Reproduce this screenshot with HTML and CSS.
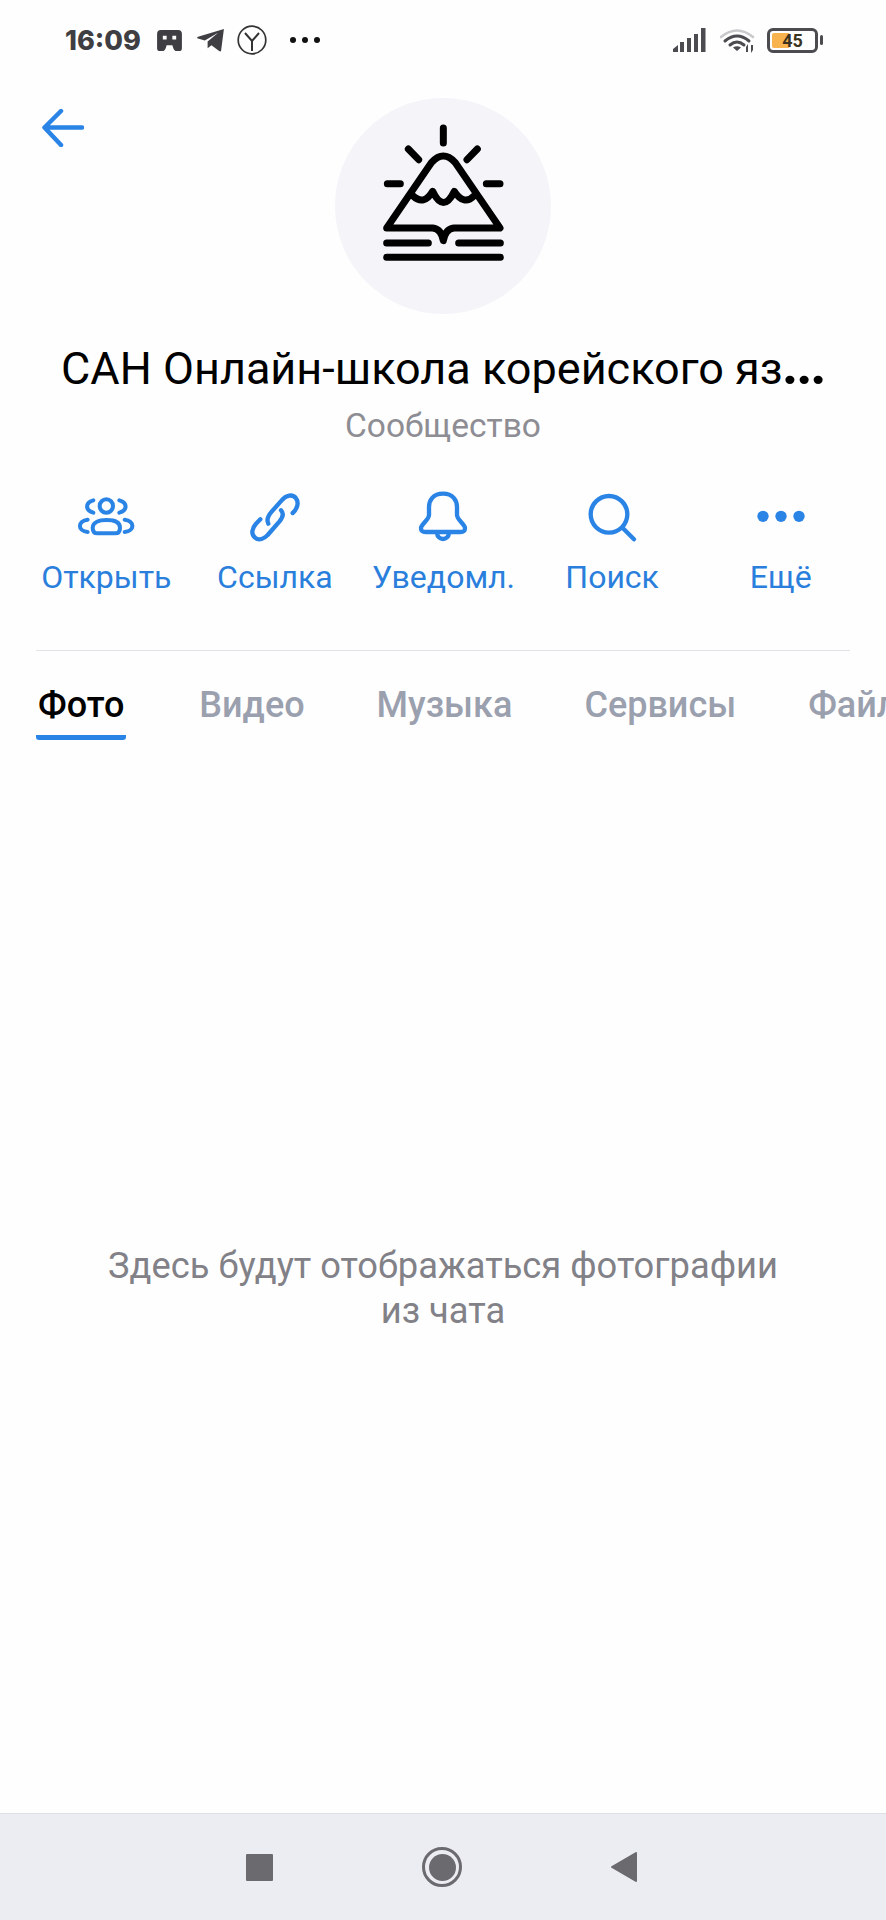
FILE: index.html
```html
<!DOCTYPE html>
<html lang="ru">
<head>
    <meta charset="UTF-8">
    <meta name="viewport" content="width=device-width, initial-scale=1.0">
    <title>Фото</title>
    <link rel="stylesheet" href="styles.css">
</head>
<body>
    <div class="screen">
        <div class="status-bar">
            <div class="status-left">
                <span class="clock">16:09</span>
                <svg class="st-game" viewBox="0 0 26 22"><path fill="#3f3e43" fill-rule="evenodd" d="M4 0H22Q26 0 26 4V19Q26 22 23 22H21Q18 22 17 19L16 16H10L9 19Q8 22 5 22H3Q0 22 0 19V4Q0 0 4 0ZM6 6V10H10V6ZM16 6V10H20V6Z"/></svg>
                <svg class="st-tg" viewBox="0 0 28 24"><path fill="#3f3e43" d="M28 0L25 23Q24.500 24 23 23L15 17L11 20L11 13L22 4L8 12L1 10Q-1 9 1 8Z"/></svg>
                <svg class="st-ya" viewBox="0 0 30 30"><circle cx="15" cy="15" r="13.800" fill="none" stroke="#333" stroke-width="1.700"/><path fill="none" stroke="#333" stroke-width="2" d="M8 8L15 16L22 8M15 16V26"/></svg>
                <div class="st-dots"><i></i><i></i><i></i></div>
            </div>
            <div class="status-right">
                <svg class="st-signal" viewBox="0 0 33 24"><path fill="#4b4b50" d="M0 24V21L5 17V24ZM7 24V14H11V24ZM14 24V10H18V24ZM21 24V6H25V24ZM28 24V0H32.500V24Z"/></svg>
                <svg class="st-wifi" viewBox="0 0 36 26"><g fill="none" stroke-linecap="round"><path stroke="#c9c9cb" stroke-width="2.500" d="M1 10Q17 -3 33 10"/><path stroke="#4b4b50" stroke-width="3" d="M5 14Q17 4 29 14"/><path stroke="#4b4b50" stroke-width="3" d="M10 18Q17 12 24 18"/></g><path fill="#4b4b50" d="M17 24L13 20.500Q17 18 21 20.500ZM28 17V25H26V20ZM31 26V18H33L33 23Z"/></svg>
                <div class="battery">
                    <div class="battery-body"><span class="battery-fill"></span><span class="battery-num">45</span></div>
                    <span class="battery-nub"></span>
                </div>
            </div>
        </div>

        <header class="profile-top">
            <a class="back" href="#">
                <svg viewBox="0 0 42 38"><path fill="none" stroke="#2a84e6" stroke-width="4.500" stroke-linecap="round" stroke-linejoin="round" d="M40 18.500H3M19 2L2.500 18.500L19 36"/></svg>
            </a>
            <div class="avatar">
                <svg viewBox="45 25 648 648">
                    <g fill="none" stroke="#000" stroke-width="21" stroke-linecap="round" stroke-linejoin="round">
                        <path d="M370 115V160M265 178L296 210M472 178L441 210M202 282H241M499 282H540"/>
                        <path d="M200 415L335 218Q370 180 405 218L540 415H402Q376 418 370 453Q364 418 338 415Z"/>
                        <path d="M278 318Q312 350 338 305Q370 372 403 305Q432 350 463 318"/>
                        <path d="M200 460H325M416 460H541M200 503H541"/>
                    </g>
                </svg>
            </div>
        </header>

        <h1 class="title">САН Онлайн-школа корейского яз<b>...</b></h1>
        <p class="subtitle">Сообщество</p>

        <nav class="actions">
            <a class="action" href="#">
                <svg viewBox="168 48 180 180"><g fill="none" stroke="#2a84e6" stroke-width="12" stroke-linecap="round" stroke-linejoin="round"><circle cx="259" cy="105" r="20"/><path d="M220 88C195 95 195 118 220 125M298 88C323 95 323 118 298 125"/><path d="M218 170C218 155 235 147 260 147C285 147 300 155 300 170C300 182 295 187 285 187H233C223 187 218 182 218 170Z"/><path d="M203 146C172 150 172 180 203 183M314 146C345 150 345 180 314 183"/></g></svg>
                <span>Открыть</span>
            </a>
            <a class="action" href="#">
                <svg viewBox="672 48 180 180"><g fill="none" stroke="#2a84e6" stroke-width="13" stroke-linecap="round" stroke-linejoin="round"><path d="M742 158C735 145 745 130 752 122L782 88C795 72 815 68 825 82C835 95 828 115 815 126"/><path d="M718 145L705 158C692 172 690 190 702 200C714 210 730 202 740 192L775 152C785 140 790 128 780 118"/></g></svg>
                <span>Ссылка</span>
            </a>
            <a class="action" href="#">
                <svg viewBox="0 0 180 180"><g fill="none" stroke="#2a84e6" stroke-width="13" stroke-linecap="round" stroke-linejoin="round"><path d="M90 20C60 20 48 40 48 60V84C48 98 24 113 24 123C24 133 28 135 38 135H142C152 135 156 133 156 123C156 113 132 98 132 84V60C132 40 120 20 90 20Z"/><path d="M72 138C74 162 106 162 108 138"/></g></svg>
                <span>Уведомл.</span>
            </a>
            <a class="action" href="#">
                <svg viewBox="399 48 180 180"><g fill="none" stroke="#2a84e6" stroke-width="13" stroke-linecap="round"><circle cx="480" cy="130" r="55"/><path d="M522 172L555 205"/></g></svg>
                <span>Поиск</span>
            </a>
            <a class="action" href="#">
                <svg viewBox="901 48 180 180"><g fill="#2a84e6"><circle cx="937" cy="136" r="17"/><circle cx="991" cy="136" r="17"/><circle cx="1045" cy="136" r="17"/></g></svg>
                <span>Ещё</span>
            </a>
        </nav>

        <div class="divider"></div>

        <div class="tabs">
            <a class="tab active" href="#">Фото</a>
            <a class="tab" href="#">Видео</a>
            <a class="tab" href="#">Музыка</a>
            <a class="tab" href="#">Сервисы</a>
            <a class="tab" href="#">Файлы</a>
        </div>

        <main class="empty">
            <p>Здесь будут отображаться фотографии<br>из чата</p>
        </main>

        <div class="nav-bar">
            <span class="nav-square"></span>
            <span class="nav-circle"><i></i></span>
            <svg class="nav-back" viewBox="0 0 26 30"><path fill="#6b6a6f" stroke="#6b6a6f" stroke-width="2" stroke-linejoin="round" d="M25 1V29L1 15Z"/></svg>
        </div>
    </div>
</body>
</html>
```

FILE: styles.css
```css
* {
    box-sizing: border-box;
}

body {
    margin: 0;
    background-color: #fefeff;
    font-family: Roboto, "Noto Sans", sans-serif;
}

a {
    text-decoration: none;
}

.screen {
    width: 886px;
    height: 1920px;
    display: flex;
    flex-direction: column;
    overflow: hidden;
}

/* status bar */
.status-bar {
    height: 80px;
    padding: 25px 63px 0 65px;
    display: flex;
    justify-content: space-between;
    align-items: flex-start;
}

.status-left,
.status-right {
    display: flex;
    align-items: center;
    height: 30px;
}

.clock {
    font-family: Inter, Roboto, sans-serif;
    font-size: 27px;
    font-weight: 800;
    color: #3f3e43;
    width: 92px;
}

.st-game { width: 25px; height: 21px; margin-right: 15px; }
.st-tg { width: 27px; height: 23px; margin-right: 13px; }
.st-ya { width: 30px; height: 30px; margin-right: 23px; }

.st-dots {
    display: flex;
    gap: 6px;
}

.st-dots i {
    width: 6px;
    height: 6px;
    border-radius: 50%;
    background-color: #111;
}

.st-signal { width: 33px; height: 24px; margin-right: 14px; }
.st-wifi { width: 36px; height: 26px; margin-right: 11px; }

.battery {
    display: flex;
    align-items: center;
    gap: 2px;
}

.battery-body {
    position: relative;
    width: 51px;
    height: 25px;
    border: 3px solid #4b4b50;
    border-radius: 6px;
    display: flex;
    align-items: center;
    justify-content: center;
}

.battery-fill {
    position: absolute;
    left: 2px;
    top: 2px;
    bottom: 2px;
    width: 18px;
    border-radius: 2px;
    background-color: #f8b24e;
}

.battery-num {
    position: relative;
    font-size: 18px;
    font-weight: 700;
    color: #3a3320;
}

.battery-nub {
    width: 3px;
    height: 10px;
    border-radius: 2px;
    background-color: #4b4b50;
}

/* header */
.profile-top {
    display: grid;
    grid-template-columns: 1fr 216px 1fr;
    padding-top: 18px;
}

.back {
    padding: 11px 0 0 42px;
}

.back svg {
    display: block;
    width: 42px;
    height: 38px;
}

.avatar {
    width: 216px;
    height: 216px;
    border-radius: 50%;
    background-color: #f4f4f9;
}

.avatar svg {
    display: block;
    width: 216px;
    height: 216px;
}

.title {
    margin: 30px 0 0;
    font-size: 45px;
    font-weight: 400;
    line-height: 50px;
    text-align: center;
    color: #000;
    white-space: nowrap;
}

.title b {
    font-size: 50px;
    font-weight: 900;
    line-height: 0;
    letter-spacing: -1px;
}

.subtitle {
    margin: 12px 0 0;
    font-size: 33.500px;
    line-height: 40px;
    text-align: center;
    color: #8d8d93;
}

/* action buttons */
.actions {
    margin-top: 41px;
    padding: 0 21px 0 22px;
    display: grid;
    grid-template-columns: repeat(5, 1fr);
}

.action {
    display: flex;
    flex-direction: column;
    align-items: center;
    color: #2a7fdc;
    font-size: 32px;
    line-height: 40px;
    white-space: nowrap;
}

.action svg {
    display: block;
    width: 60px;
    height: 60px;
    margin-bottom: 10px;
}

.divider {
    margin: 53px 36px 0;
    height: 1px;
    background-color: #e3e3e7;
}

/* tabs */
.tabs {
    margin-top: 32px;
    padding-left: 36px;
    display: flex;
    gap: 68px;
    white-space: nowrap;
}

.tab {
    padding: 0 2px 8px;
    border-bottom: 5px solid transparent;
    font-size: 36px;
    font-weight: 500;
    line-height: 44px;
    color: #9ba0ae;
}

.tab.active {
    margin-right: 3px;
    color: #000;
    border-bottom-color: #2a84e6;
    border-radius: 0 0 3px 3px;
}

/* empty state */
.empty {
    flex: 1;
    padding-top: 503px;
}

.empty p {
    margin: 0;
    font-size: 36.300px;
    line-height: 45px;
    text-align: center;
    color: #818187;
}

/* bottom nav */
.nav-bar {
    height: 107px;
    border-top: 1px solid #dfdfe5;
    background-color: #ecedf3;
    padding: 0 249px 0 246px;
    display: flex;
    justify-content: space-between;
    align-items: center;
}

.nav-square {
    width: 27px;
    height: 27px;
    border-radius: 1px;
    background-color: #6b6a6f;
}

.nav-circle {
    width: 40px;
    height: 40px;
    border: 3px solid #6b6a6f;
    border-radius: 50%;
    display: flex;
    align-items: center;
    justify-content: center;
}

.nav-circle i {
    width: 27px;
    height: 27px;
    border-radius: 50%;
    background-color: #6b6a6f;
}

.nav-back {
    width: 26px;
    height: 30px;
}
```
